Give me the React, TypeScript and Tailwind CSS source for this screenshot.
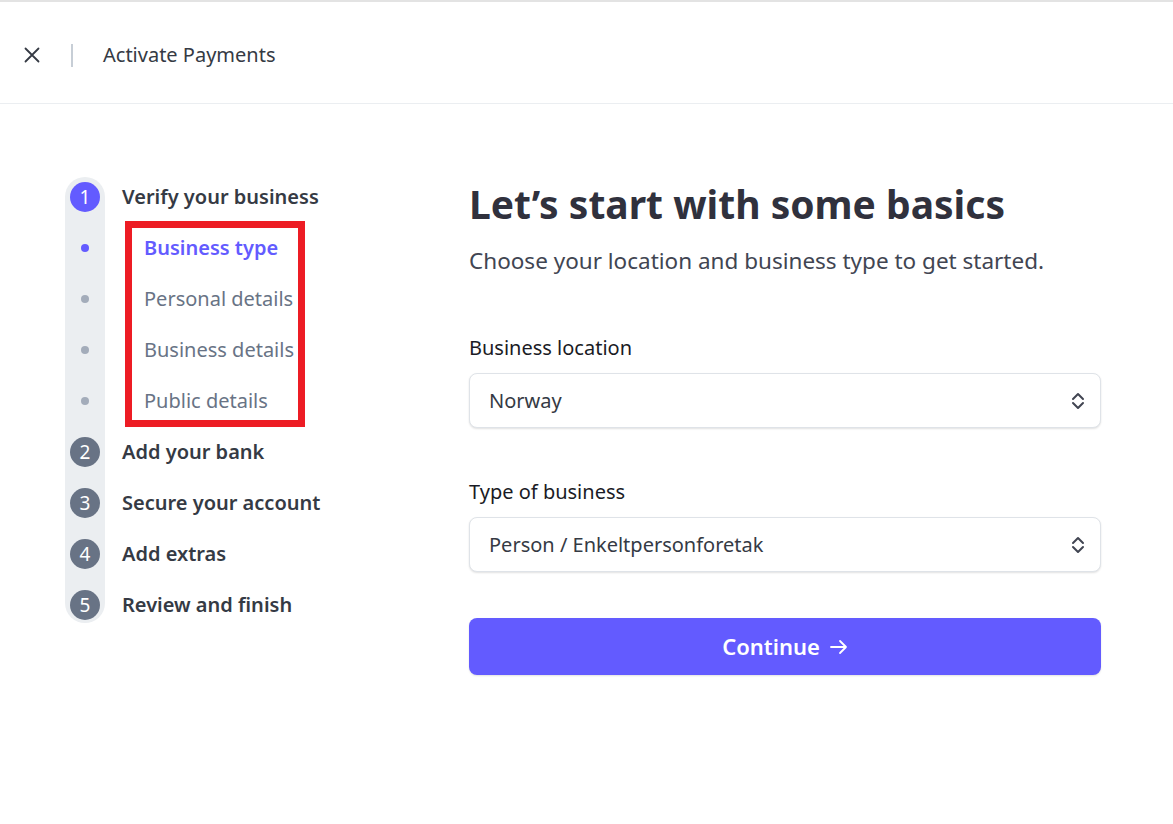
import React from "react";

const font = { fontFamily: '"Noto Sans", "Open Sans", Arial, sans-serif' };

function Chevrons() {
  return (
    <svg width="14" height="18" viewBox="0 0 14 18" fill="none" stroke="#414552" strokeWidth="2" strokeLinecap="round" strokeLinejoin="round">
      <path d="M2 7 L7 2 L12 7" />
      <path d="M2 11 L7 16 L12 11" />
    </svg>
  );
}

function Select({ value }: { value: string }) {
  return (
    <div className="flex h-[55px] w-full items-center justify-between rounded-lg border border-[#dfe3e8] bg-white pl-[19px] pr-[15px] shadow-[0_1px_2px_rgba(0,0,0,0.12)]">
      <span className="text-[20px] text-[#353a44]">{value}</span>
      <Chevrons />
    </div>
  );
}

export default function App() {
  const steps = ["Add your bank", "Secure your account", "Add extras", "Review and finish"];
  const subs = ["Business type", "Personal details", "Business details", "Public details"];
  return (
    <div className="min-h-[824px] w-full border-t-2 border-[#e3e3e3] bg-white" style={font}>
      <header className="flex h-[102px] items-center border-b border-[#ebeef1] pt-[5px]">
        <div className="flex w-[64px] justify-center">
          <svg width="16" height="16" viewBox="0 0 16 16" stroke="#353a44" strokeWidth="1.8" strokeLinecap="round">
            <path d="M1.5 1.5 L14.5 14.5 M14.5 1.5 L1.5 14.5" />
          </svg>
        </div>
        <div className="ml-[7px] h-[23px] w-[2px] bg-[#c7ced6]" />
        <div className="ml-[30px] text-[20px] text-[#353a44]">Activate Payments</div>
      </header>

      <main className="flex items-start pl-[65px] pt-[73px]">
        <div className="flex w-[404px] shrink-0 items-start">
          {/* track */}
          <div className="flex w-[40px] flex-col items-center gap-[21px] rounded-full bg-[#ebeef1] pb-[3px] pt-[5px]">
            <div className="flex h-[30px] w-[30px] items-center justify-center rounded-full bg-[#635bff] text-[19px] text-white">1</div>
            {subs.map((s, i) => (
              <div key={s} className="flex h-[30px] w-[30px] items-center justify-center">
                <div className={`h-[8px] w-[8px] rounded-full ${i === 0 ? "bg-[#635bff]" : "bg-[#a3acba]"}`} />
              </div>
            ))}
            {[2, 3, 4, 5].map((n) => (
              <div key={n} className="flex h-[30px] w-[30px] items-center justify-center rounded-full bg-[#687385] text-[19px] text-white">{n}</div>
            ))}
          </div>
          {/* labels */}
          <div className="ml-[17px] flex flex-col gap-[21px] pt-[5px]">
            <div className="flex h-[30px] items-center text-[20px] font-semibold text-[#353a44]">Verify your business</div>
            <div className="-mb-[11px] -mt-[12px] ml-[3px] flex w-[180px] flex-col gap-[21px] border-[7px] border-[#ed1c24] pb-[4px] pl-[12px] pt-[5px]">
              {subs.map((s, i) => (
                <div key={s} className={`flex h-[30px] items-center whitespace-nowrap text-[20px] ${i === 0 ? "font-semibold text-[#635bff]" : "text-[#687385]"}`}>{s}</div>
              ))}
            </div>
            {steps.map((s) => (
              <div key={s} className="flex h-[30px] items-center text-[20px] font-semibold text-[#353a44]">{s}</div>
            ))}
          </div>
        </div>

        <div className="flex w-[632px] flex-col">
          <h1 className="mt-[3px] text-[39px] font-bold leading-[48px] text-[#30313d]">Let’s start with some basics</h1>
          <p className="mt-[18px] text-[22.5px] leading-[30px] text-[#414552]">Choose your location and business type to get started.</p>
          <label className="mt-[59px] text-[20px] leading-[26px] text-[#1a1b25]">Business location</label>
          <div className="mt-[12px]"><Select value="Norway" /></div>
          <label className="mt-[51px] text-[20px] leading-[26px] text-[#1a1b25]">Type of business</label>
          <div className="mt-[12px]"><Select value="Person / Enkeltpersonforetak" /></div>
          <button className="mt-[46px] flex h-[57px] w-full items-center justify-center gap-[10px] rounded-lg bg-[#635bff] text-[22px] font-semibold text-white shadow-[0_1px_2px_rgba(0,0,0,0.12)]">
            Continue
            <svg width="18" height="16" viewBox="0 0 18 16" fill="none" stroke="white" strokeWidth="1.8" strokeLinecap="round" strokeLinejoin="round">
              <path d="M1 8 H16 M10 2 L16 8 L10 14" />
            </svg>
          </button>
        </div>
      </main>
    </div>
  );
}
